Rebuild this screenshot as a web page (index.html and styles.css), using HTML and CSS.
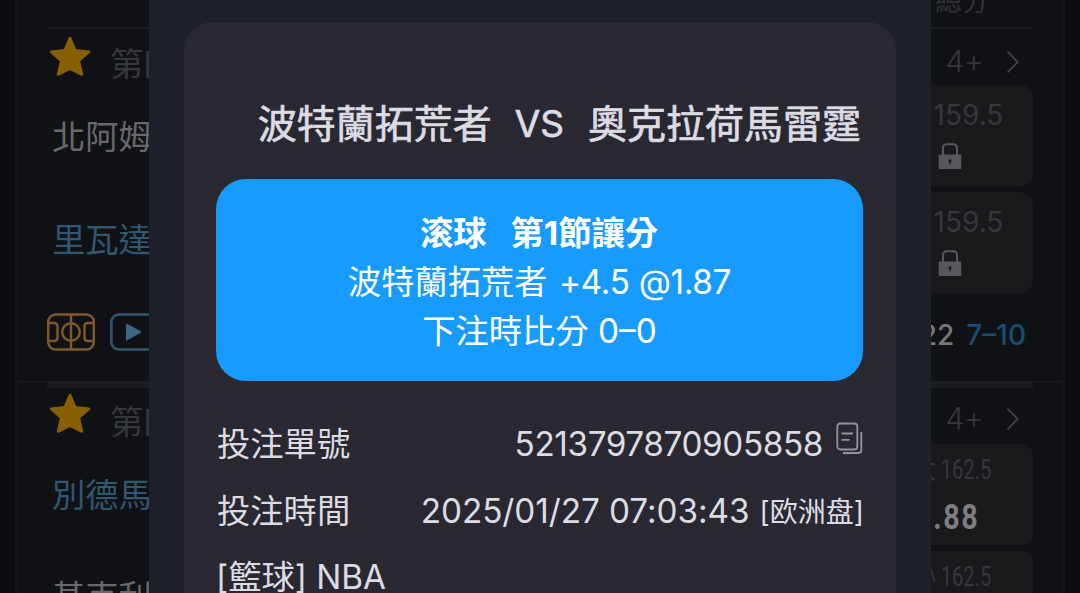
FILE: index.html
```
<!DOCTYPE html>
<html lang="zh-Hant">
    <head>
        <meta charset="utf-8">
        <title>注單</title>
        <link rel="stylesheet" href="styles.css">
    </head>

    <body>
        <svg width="0" height="0" class="defs">
            <symbol id="star" viewBox="0 0 42 41">
                <path d="M21 2 L26.4 14.4 L40 15.8 L29.8 24.9 L32.9 38.5 L21 32.6 L9.1 38.5 L12.2 24.9 L2 15.8 L15.6 14.4 Z" fill="#886004" stroke="#886004" stroke-width="2.6" stroke-linejoin="round"/>
            </symbol>
            <symbol id="arrow" viewBox="0 0 14 24">
                <path d="M1.5 1.5 L11.5 12 L1.5 22.5" fill="none" stroke="#45464a" stroke-width="1.8"/>
            </symbol>
            <symbol id="lock" viewBox="0 0 24 27">
                <path d="M5 12 V5 Q5 1.2 9 1.2 H15 Q19 1.2 19 5 V12" fill="none" stroke="#57575c" stroke-width="2"/>
                <path d="M1.5 11.5 H22.5 Q23.3 11.5 23.3 12.3 V25.2 Q23.3 26 22.5 26 H1.5 Q.7 26 .7 25.2 V12.3 Q.7 11.5 1.5 11.5 Z" fill="#57575c"/>
                <path d="M12 16.3 a1.6 1.6 0 0 1 1.2 2.6 L12 22 L10.8 18.9 a1.6 1.6 0 0 1 1.2 -2.6 Z" fill="#1b1b1f"/>
            </symbol>
        </svg>

        <div class="list">
            <div class="list-head">總分</div>

            <div class="match">
                <div class="match-top">
                    <svg class="star"><use href="#star"/></svg>
                    <span class="period">第四節</span>
                    <span class="more">4+</span>
                    <svg class="arrow"><use href="#arrow"/></svg>
                </div>
                <div class="match-body">
                    <div class="teams">
                        <div class="team">北阿姆</div>
                        <div class="team blue">里瓦達</div>
                    </div>
                    <div class="odds">
                        <div class="odd">
                            <span class="line">159.5</span>
                            <svg class="lock"><use href="#lock"/></svg>
                        </div>
                        <div class="odd">
                            <span class="line">159.5</span>
                            <svg class="lock"><use href="#lock"/></svg>
                        </div>
                    </div>
                </div>
                <div class="match-foot">
                    <svg class="court" viewBox="0 0 48 38">
                        <g fill="none" stroke="#80592b" stroke-width="2.4">
                            <rect x="1.2" y="1.5" width="45.6" height="35" rx="7.5"/>
                            <path d="M24 1.5 V36.5"/>
                            <circle cx="24" cy="19" r="8.8"/>
                            <path d="M1.2 10 H7 Q10.5 10 10.5 13.5 V24.5 Q10.5 28 7 28 H1.2"/>
                            <path d="M46.8 10 H41 Q37.5 10 37.5 13.5 V24.5 Q37.5 28 41 28 H46.8"/>
                        </g>
                    </svg>
                    <svg class="play" viewBox="0 0 48 38">
                        <rect x="1.4" y="1.5" width="45.2" height="35" rx="7.5" fill="none" stroke="#32546d" stroke-width="2.6"/>
                        <path d="M17 12 L30 19 L17 26.5 Z" fill="#3e6684" stroke="#3e6684" stroke-width="2" stroke-linejoin="round"/>
                    </svg>
                    <div class="scores"><span>22</span><span class="quarter">7–10</span></div>
                </div>
            </div>

            <div class="match second">
                <div class="match-top">
                    <svg class="star"><use href="#star"/></svg>
                    <span class="period">第四節</span>
                    <span class="more">4+</span>
                    <svg class="arrow"><use href="#arrow"/></svg>
                </div>
                <div class="match-body">
                    <div class="teams">
                        <div class="team blue">別德馬</div>
                        <div class="team">基克利</div>
                    </div>
                    <div class="odds">
                        <div class="odd open">
                            <span class="line">大 162.5</span>
                            <b class="price">1.88</b>
                        </div>
                        <div class="odd open">
                            <span class="line">小 162.5</span>
                            <b class="price">1.88</b>
                        </div>
                    </div>
                </div>
            </div>
        </div>

        <div class="modal">
            <div class="ticket">
                <div class="title"><span>波特蘭拓荒者</span><span class="vs">VS</span><span>奧克拉荷馬雷霆</span></div>

                <div class="bet">
                    <div class="bet-type"><span>滚球</span><span>第1節讓分</span></div>
                    <div class="bet-pick">波特蘭拓荒者 <span class="nums">+4.5 @1.87</span></div>
                    <div class="bet-score">下注時比分 0–0</div>
                </div>

                <div class="row">
                    <span>投注單號</span>
                    <span class="value number">5213797870905858</span>
                    <svg class="copy" viewBox="0 0 27 33">
                        <g fill="none" stroke="#93939e" stroke-width="1.8">
                            <rect x="1.3" y="1.5" width="20" height="26" rx="3"/>
                            <path d="M5.5 11.5 H17 M5.5 17.8 H13.5"/>
                            <path d="M25.3 10 V28 Q25.3 31 22.3 31 H7"/>
                        </g>
                    </svg>
                </div>
                <div class="row">
                    <span>投注時間</span>
                    <span class="value time">2025/01/27 07:03:43</span>
                    <span class="market">[欧洲盘]</span>
                </div>
                <div class="row league">[籃球] NBA</div>
            </div>
        </div>
    </body>
</html>
```
FILE: styles.css
```
*{
    box-sizing: border-box;
}

body{
    margin: 0;
    height: 593px;
    overflow: hidden;
    position: relative;
    background-color: #0a0b0f;
    font-family: Inter, "Noto Sans CJK TC", sans-serif;
    font-size: 33.3px;
    font-weight: 400;
    color: #dcdce2;
    white-space: nowrap;
}

svg{
    display: block;
    flex: none;
}

.defs{
    position: absolute;
}

/* match list behind the ticket */

.list{
    height: 593px;
    margin: 0 15px;
    padding: 0 30px;
    background-color: #101115;
    border-left: 2px solid #15161a;
    border-right: 2px solid #15161a;
    overflow: hidden;
}

.list-head{
    height: 29px;
    border-bottom: 2px solid #1b1c20;
    padding-right: 44px;
    text-align: right;
    font-size: 27px;
    line-height: 3px;
    color: #303135;
}

.match{
    height: 352px;
    position: relative;
}

.second{
    border-top: 6px solid #1a1b1f;
    height: 300px;
    margin-top: 1px;
}

.second::before{
    content: "";
    position: absolute;
    left: -30px;
    right: -30px;
    top: -7px;
    height: 1px;
    background-color: #1a1b1f;
}

.match-top{
    height: 56px;
    display: flex;
    align-items: center;
    padding: 10px 13px 0 2px;
    color: #36373b;
}

.second .match-top{
    padding-top: 9px;
}

.star{
    width: 42px;
    height: 41px;
    margin-top: -12px;
}

.period{
    margin-left: 19px;
    margin-top: -2px;
}

.more{
    margin-left: auto;
    margin-right: 23px;
    font-size: 30px;
    font-weight: 300;
    letter-spacing: -0.5px;
    margin-top: -2px;
}

.arrow{
    width: 14px;
    height: 24px;
}

.second .star{
    margin-top: -14px;
}

.second .period{
    margin-top: -2px;
}

.second .more{
    margin-top: -5px;
}

.second .arrow{
    margin-top: -3px;
}

.match-body{
    display: flex;
    justify-content: space-between;
}

.teams{
    padding-left: 5px;
}

.team{
    height: 103px;
    line-height: 104px;
    color: #68686b;
}

.team.blue{
    color: #31566f;
}

.second .team{
    height: 102px;
    line-height: 102px;
}

.odds{
    width: 170px;
    display: flex;
    flex-direction: column;
    gap: 6px;
}

.odd{
    height: 101px;
    border-radius: 12px;
    background-color: #19191c;
    display: flex;
    flex-direction: column;
    align-items: center;
    padding-top: 13px;
    color: #36373b;
}

.odd .line{
    font-size: 28px;
    line-height: 34px;
    padding-left: 41px;
}

.lock{
    width: 24px;
    height: 27px;
    margin: 11px 0 0 4px;
}

.open{
    align-items: flex-end;
    padding-right: 42px;
    padding-top: 9px;
}

.open .line{
    font-family: Roboto, "Noto Sans CJK TC", sans-serif;
    font-size: 28px;
    padding: 0;
    transform: scaleX(0.72);
    transform-origin: right;
}

.price{
    font-family: Roboto, sans-serif;
    font-size: 35px;
    line-height: 40px;
    margin: 11px 12px 0 0;
    letter-spacing: 2px;
    transform: scaleX(0.82);
    transform-origin: right;
    color: #7d7d80;
}

.match-foot{
    height: 78px;
    display: flex;
    align-items: center;
}

.court,
.play{
    width: 48px;
    height: 38px;
    margin-top: -1px;
}

.play{
    margin-left: 15px;
}

.scores{
    margin-left: auto;
    margin-right: 7px;
    display: flex;
    gap: 12px;
    font-size: 28px;
    font-weight: 500;
    color: #77777a;
    padding-top: 5px;
}

.quarter{
    color: #164d73;
}

/* ticket */

.modal{
    position: absolute;
    left: 149px;
    top: 0;
    width: 782px;
    height: 593px;
    padding: 22px 35px 0;
    overflow: hidden;
    background-color: #1e2029;
}

.ticket{
    height: 700px;
    padding: 67px 33px 0 32px;
    border-radius: 28px;
    background-color: #292831;
}

.title{
    height: 90px;
    line-height: 69px;
    display: flex;
    justify-content: flex-end;
    gap: 24px;
    font-size: 39px;
    padding-right: 2px;
    -webkit-text-stroke: 0.7px #dcdce2;
}

.vs{
    font-size: 37px;
    margin-left: -1px;
}

.bet{
    height: 202px;
    padding-top: 30px;
    border-radius: 30px;
    background-color: #189bff;
    color: #fff;
    text-align: center;
    line-height: 49px;
}

.bet-type{
    display: flex;
    justify-content: center;
    gap: 24px;
    font-weight: 700;
    padding-right: 1px;
}

.nums{
    letter-spacing: -0.3px;
    margin-left: 2px;
}

.row{
    height: 67px;
    line-height: 67px;
    display: flex;
    align-items: center;
    padding-left: 1px;
}

.bet + .row{
    margin-top: 30px;
}

.row.league{
    height: 64px;
    line-height: 64px;
    padding-left: 0;
}

.value{
    margin-left: auto;
}

.number{
    letter-spacing: -0.4px;
}

.time{
    letter-spacing: -0.05px;
}

.copy{
    width: 27px;
    height: 33px;
    margin: -12px 0 0 13px;
}

.market{
    font-family: Inter, "Noto Sans CJK SC", sans-serif;
    font-size: 28px;
    margin-left: 10px;
    margin-right: -1px;
    padding-top: 2px;
}
```
